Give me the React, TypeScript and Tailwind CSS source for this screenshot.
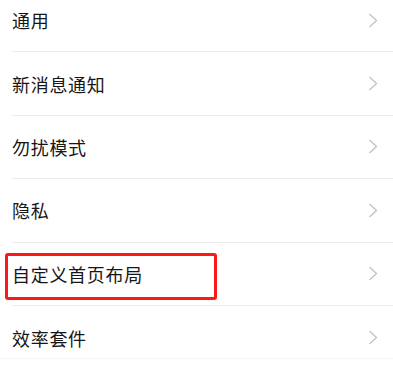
import React from 'react';

const items = ['通用', '新消息通知', '勿扰模式', '隐私', '自定义首页布局', '效率套件'];

function Chevron() {
  return (
    <svg width="10" height="15" viewBox="0 0 10 15" className="shrink-0">
      <polyline points="1.5,1 8.5,7.5 1.5,14" fill="none" stroke="#c2c2c6" strokeWidth="1.3" />
    </svg>
  );
}

export default function App() {
  return (
    <div
      className="w-[393px] h-[367px] bg-white overflow-hidden"
      style={{ fontFamily: '"Noto Sans CJK SC", "Noto Sans", sans-serif' }}
    >
      <div className="-mt-[11px] flex flex-col">
        {items.map((label, i) => (
          <div key={label} className="pl-3 bg-white">
            <div
              className={`relative h-[63.4px] flex items-center justify-between pr-[15px] ${
                i === items.length - 1 ? '' : 'border-b border-[#ececec]'
              }`}
            >
              {i === 4 && (
                <div className="absolute -left-[7px] top-[10px] w-[212px] h-[47px] border-[3px] border-[#fb1818] rounded-[3px]" />
              )}
              {i === items.length - 1 && (
                <div className="absolute -left-3 right-0 top-[52px] border-b border-[#f4f4f4]" />
              )}
              <span className="text-[18px] text-[#161616] leading-none tracking-[0.7px]">{label}</span>
              <Chevron />
            </div>
          </div>
        ))}
      </div>
    </div>
  );
}
